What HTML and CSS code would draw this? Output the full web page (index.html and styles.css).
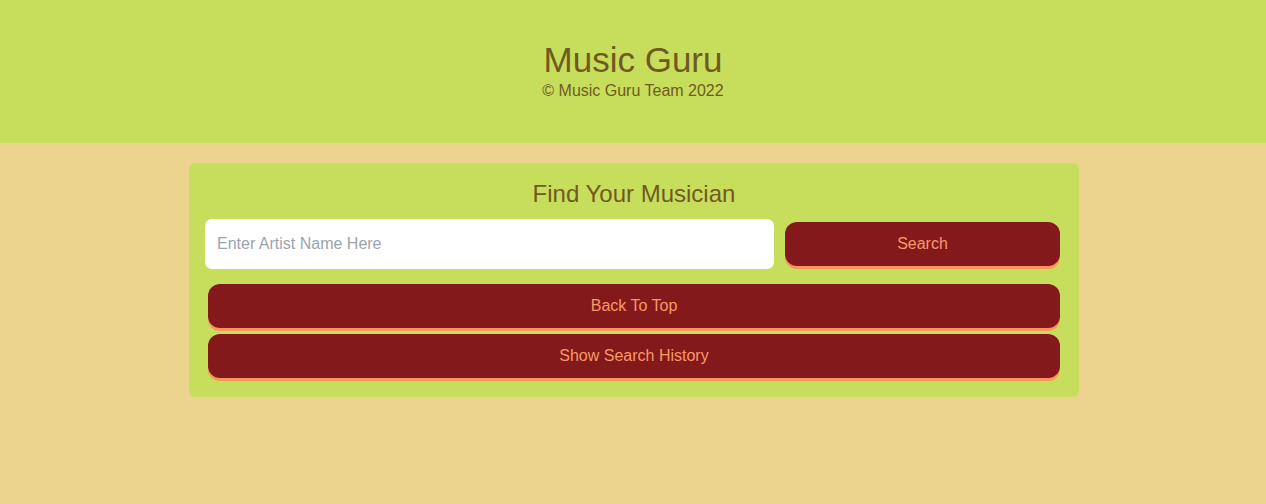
FILE: index.html
```html
<!DOCTYPE html>
<html lang="en">
<head>
<meta charset="utf-8">
<title>Music Guru</title>
<link rel="stylesheet" href="styles.css">
</head>
<body>
<header class="site-header">
  <h1 class="site-title">Music Guru</h1>
  <p class="site-sub">© Music Guru Team 2022</p>
</header>
<main class="main">
  <section class="card">
    <h2 class="card-title">Find Your Musician</h2>
    <div class="search-row">
      <input class="search-input" type="text" placeholder="Enter Artist Name Here">
      <button class="btn btn-search">Search</button>
    </div>
    <div class="actions">
      <button class="btn">Back To Top</button>
      <button class="btn">Show Search History</button>
    </div>
  </section>
</main>
</body>
</html>
```
FILE: styles.css
```css
* { box-sizing: border-box; }
html, body { margin: 0; padding: 0; }
body {
  background: #ecd48e;
  font-family: "Liberation Sans", Arial, Helvetica, sans-serif;
  color: #715a1f;
  min-height: 504px;
}
.site-header {
  background: #c7de5c;
  height: 143px;
  display: flex;
  flex-direction: column;
  align-items: center;
  justify-content: center;
  padding-bottom: 1px;
}
.site-title {
  margin: 0;
  font-size: 35px;
  line-height: 40px;
  font-weight: 400;
  color: #715a1f;
}
.site-sub {
  margin: 0;
  font-size: 16px;
  line-height: 22px;
  color: #715a1f;
}
.main {
  display: flex;
  justify-content: center;
  padding-top: 20px;
  padding-left: 2px;
}
.card {
  width: 890px;
  background: #c7de5c;
  border-radius: 6px;
  padding: 15px 16px 16px;
  display: flex;
  flex-direction: column;
}
.card-title {
  margin: 0 0 9px;
  font-size: 24px;
  line-height: 32px;
  font-weight: 400;
  text-align: center;
  color: #715a1f;
}
.search-row {
  display: flex;
  align-items: center;
  gap: 8px;
}
.search-input {
  flex: 1;
  height: 50px;
  border: none;
  border-radius: 7px;
  background: #ffffff;
  padding: 0 12px;
  font-family: inherit;
  font-size: 16px;
  color: #374151;
  outline: none;
}
.search-input::placeholder { color: #9ca3af; }
.btn {
  display: block;
  height: 44px;
  margin: 0 3px 3px;
  border: none;
  border-radius: 12px;
  background: #83191b;
  color: #f79a68;
  font-family: inherit;
  font-size: 16px;
  box-shadow: 0 3px 0 #f7955c;
  cursor: pointer;
}
.btn-search {
  width: 275px;
  flex: none;
  margin: 3px 3px 3px 3px;
}
.actions {
  display: flex;
  flex-direction: column;
  gap: 3px;
  margin-top: 15px;
}
.actions .btn { width: auto; }
```
